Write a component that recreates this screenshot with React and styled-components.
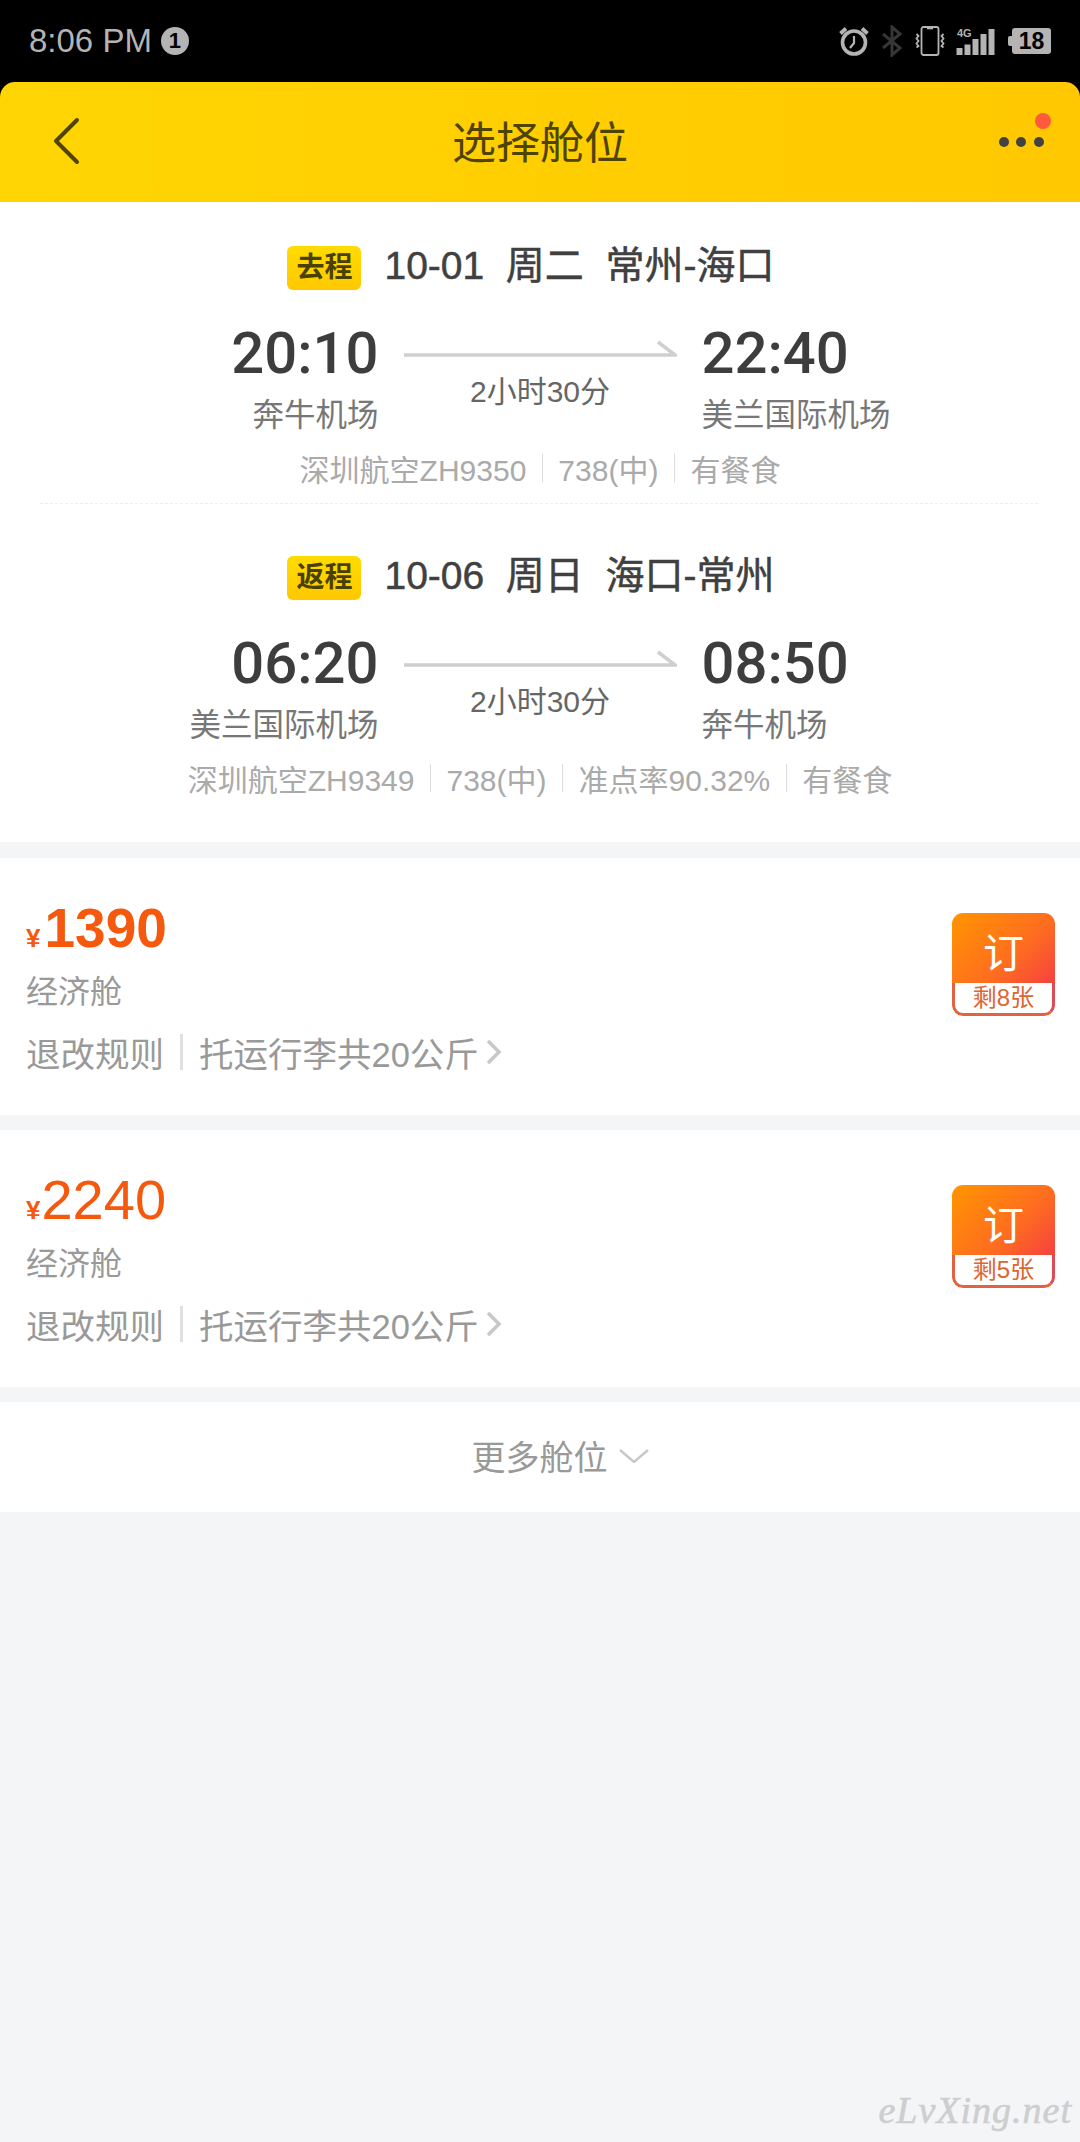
import React from "react";
import styled, { createGlobalStyle } from "styled-components";

const Global = createGlobalStyle`
  html, body { margin: 0; padding: 0; background: #f4f5f7; }
  body { font-family: "Liberation Sans", "Noto Sans CJK SC", sans-serif; }
  * { box-sizing: border-box; }
`;

const Page = styled.div`
  position: relative;
  width: 1080px;
  height: 2142px;
  overflow: hidden;
  background: #f4f5f7;
`;

const StatusBar = styled.div`
  height: 82px;
  background: #000;
  display: flex;
  align-items: center;
  padding: 0 29px 0 29px;
  color: #b4b4b4;
`;
const Clock = styled.span`
  font-size: 33px;
  line-height: 82px;
`;
const NoticeBadge = styled.span`
  width: 28px;
  height: 28px;
  margin-left: 9px;
  border-radius: 50%;
  background: #b4b4b4;
  color: #000;
  font-size: 22px;
  font-weight: 700;
  display: flex;
  align-items: center;
  justify-content: center;
`;
const StatusIcons = styled.div`
  margin-left: auto;
  display: flex;
  align-items: center;
`;
const Battery = styled.div`
  position: relative;
  margin-left: 17px;
  width: 39px;
  height: 26px;
  background: #b4b4b4;
  border-radius: 3px;
  color: #000;
  font-size: 23px;
  font-weight: 700;
  line-height: 26px;
  text-align: center;
  &::before {
    content: "";
    position: absolute;
    left: -4px;
    top: 8px;
    width: 4px;
    height: 10px;
    border-radius: 2px 0 0 2px;
    background: #b4b4b4;
  }
`;

const Header = styled.header`
  position: relative;
  height: 120px;
  background: #000;
`;
const HeaderFill = styled.div`
  height: 100%;
  border-radius: 15px 15px 0 0;
  padding-bottom: 5px;
  background: linear-gradient(90deg, #ffd503, #ffc800);
  display: flex;
  align-items: center;
  justify-content: center;
`;
const Title = styled.h1`
  margin: 0;
  font-size: 44px;
  font-weight: 400;
  color: #4f4300;
`;
const BackIcon = styled.svg`
  position: absolute;
  left: 50px;
  top: 33px;
`;
const MoreDots = styled.svg`
  position: absolute;
  right: 29px;
  top: 27px;
`;

const FlightPanel = styled.section`
  height: 640px;
  background: #fff;
  padding-top: 44px;
`;
const Flight = styled.div`
  display: flex;
  flex-direction: column;
  align-items: center;
`;
const DateRow = styled.div`
  height: 44px;
  margin-right: 18px;
  display: flex;
  align-items: center;
  gap: 23px;
`;
const TripTag = styled.span`
  width: 74px;
  height: 44px;
  border-radius: 6px;
  background: linear-gradient(180deg, #ffdc00, #ffc800);
  color: #4a4000;
  font-size: 28px;
  font-weight: 700;
  line-height: 44px;
  text-align: center;
`;
const DateText = styled.span`
  padding-bottom: 12px;
  font-size: 39px;
  color: #404040;
  white-space: pre;
  -webkit-text-stroke: 0.5px #404040;
`;
const TimeGrid = styled.div`
  width: 100%;
  margin-top: 28px;
  display: grid;
  grid-template-columns: 1fr 273px 1fr;
  column-gap: 25px;
`;
const Endpoint = styled.div`
  text-align: ${(p) => (p.$end ? "right" : "left")};
`;
const Time = styled.div`
  font-family: Roboto, "Liberation Sans", sans-serif;
  font-size: 58px;
  font-weight: 500;
  line-height: 70px;
  color: #3d3d3d;
`;
const Airport = styled.div`
  margin-top: 7px;
  font-size: 31.5px;
  line-height: 40px;
  color: #777;
`;
const Middle = styled.div`
  display: flex;
  flex-direction: column;
  align-items: center;
  padding-top: 21px;
`;
const Duration = styled.div`
  margin-top: 13px;
  font-size: 30px;
  line-height: 40px;
  color: #666;
`;
const InfoRow = styled.div`
  margin-top: 13px;
  height: 40px;
  display: flex;
  align-items: center;
  font-size: 30px;
  color: #aaa;
`;
const InfoSep = styled.i`
  width: 1px;
  height: 28px;
  margin: 0 15.5px;
  background: #ddd;
`;
const Dashed = styled.div`
  margin: 15px 42px 52px 40px;
  border-top: 1px dashed #eee;
`;

const Fare = styled.section`
  height: 257px;
  margin-top: ${(p) => p.$gap}px;
  background: #fff;
  padding: 40px 25px 0 26px;
  display: flex;
  justify-content: space-between;
`;
const Price = styled.div`
  height: 60px;
  display: flex;
  align-items: baseline;
  color: #f4590d;
  font-weight: ${(p) => (p.$bold ? 700 : 400)};
`;
const Yen = styled.span`
  font-size: 26px;
  font-weight: 700;
  margin-right: ${(p) => (p.$bold ? 4 : 1)}px;
`;
const Amount = styled.span`
  font-size: ${(p) => (p.$bold ? 55 : 56)}px;
  line-height: 60px;
`;
const Cabin = styled.div`
  margin-top: 14px;
  font-size: 32px;
  line-height: 40px;
  color: #999;
`;
const Rules = styled.div`
  margin-top: 20px;
  height: 40px;
  display: flex;
  align-items: center;
  font-size: 34.5px;
  color: #999;
`;
const RuleSep = styled.i`
  width: 3px;
  height: 36px;
  margin: 0 16px;
  background: #e0e0e0;
`;
const RuleChevron = styled.svg`
  margin-left: 7px;
`;
const Book = styled.div`
  margin-top: 15px;
  width: 103px;
  height: 103px;
  border-radius: 11px;
  overflow: hidden;
  display: flex;
  flex-direction: column;
`;
const BookLabel = styled.div`
  height: 70px;
  padding-top: 13px;
  background: linear-gradient(135deg, #ff9500 0%, #ff6d20 60%, #f5413f 100%);
  color: #fff;
  font-size: 41px;
  line-height: 57px;
  text-align: center;
`;
const BookStock = styled.div`
  height: 33px;
  border: 3px solid #e2633f;
  border-top: 0;
  border-right-color: #e04a55;
  border-radius: 0 0 11px 11px;
  background: #fff;
  color: #dd6530;
  font-size: 24px;
  line-height: 29px;
  text-align: center;
`;
const MoreRow = styled.div`
  margin-top: 15px;
  height: 110px;
  padding: 0 0 3px 40px;
  background: #fff;
  display: flex;
  align-items: center;
  justify-content: center;
  gap: 11px;
  font-size: 34px;
  color: #999;
`;
const Watermark = styled.div`
  position: absolute;
  right: 8px;
  bottom: 10px;
  font-family: "Liberation Serif", serif;
  font-style: italic;
  font-size: 38px;
  letter-spacing: 1px;
  color: #cdced0;
  -webkit-text-stroke: 0.6px #cdced0;
`;

const flights = [
  {
    tag: "去程",
    date: "10-01  周二  常州-海口",
    dep: "20:10",
    from: "奔牛机场",
    arr: "22:40",
    to: "美兰国际机场",
    info: ["深圳航空ZH9350", "738(中)", "有餐食"],
  },
  {
    tag: "返程",
    date: "10-06  周日  海口-常州",
    dep: "06:20",
    from: "美兰国际机场",
    arr: "08:50",
    to: "奔牛机场",
    info: ["深圳航空ZH9349", "738(中)", "准点率90.32%", "有餐食"],
  },
];

const fares = [
  { price: "1390", bold: true, left: 8, gap: 16 },
  { price: "2240", bold: false, left: 5, gap: 15 },
];

const AlarmIcon = () => (
  <svg width="32" height="32" viewBox="0 0 32 32" fill="none" stroke="#b4b4b4">
    <circle cx="16" cy="17.5" r="11.5" strokeWidth="3.6" />
    <path d="M16 11v7l-4 5" strokeWidth="2.2" />
    <path d="M2.5 8.5 8 3.5M29.5 8.5 24 3.5" strokeWidth="3.8" />
  </svg>
);
const BluetoothIcon = () => (
  <svg width="22" height="32" viewBox="0 0 22 32" fill="none" stroke="#363636" strokeWidth="3" style={{ marginLeft: 11 }}>
    <path d="M2 9l17 14-8 7V2l8 7L2 23" />
  </svg>
);
const VibrateIcon = () => (
  <svg width="32" height="32" viewBox="0 0 32 32" fill="none" stroke="#b4b4b4" style={{ marginLeft: 11 }}>
    <rect x="7.5" y="2" width="17" height="28" rx="2" strokeWidth="1.8" />
    <path d="M13 3.5h6" strokeWidth="1.6" />
    <path d="M2.5 9l2 2-2 2.5 2 2.5-2 2.5 2 2.5-2 1.5M29.5 9l-2 2 2 2.5-2 2.5 2 2.5-2 2.5 2 1.5" strokeWidth="1.8" />
  </svg>
);
const SignalIcon = () => (
  <svg width="39" height="27" viewBox="0 0 39 27" style={{ marginLeft: 10 }}>
    <text x="1" y="9" fontSize="11" fontWeight="700" fontFamily="Liberation Sans" fill="#b4b4b4">4G</text>
    <g fill="#b4b4b4">
      <rect x="0.5" y="20" width="6" height="7" />
      <rect x="8.5" y="16.5" width="6" height="10.5" />
      <rect x="16.5" y="11" width="6" height="16" />
      <rect x="24.5" y="6" width="6" height="21" />
      <rect x="32.5" y="1" width="6" height="26" />
    </g>
  </svg>
);

const Half = () => (
  <svg width="273" height="20" viewBox="0 0 273 20" fill="none" stroke="#cfcfcf" strokeWidth="3.5">
    <path d="M0 16h271L254 3" />
  </svg>
);

export default function App() {
  return (
    <Page>
      <Global />
      <StatusBar>
        <Clock>8:06 PM</Clock>
        <NoticeBadge>1</NoticeBadge>
        <StatusIcons>
          <AlarmIcon />
          <BluetoothIcon />
          <VibrateIcon />
          <SignalIcon />
          <Battery>18</Battery>
        </StatusIcons>
      </StatusBar>
      <Header>
        <HeaderFill>
          <Title>选择舱位</Title>
        </HeaderFill>
        <BackIcon width="34" height="52" viewBox="0 0 34 52" fill="none" stroke="#4f4300" strokeWidth="4" strokeLinecap="round" strokeLinejoin="round">
          <path d="M27 5 6 26l21 21" />
        </BackIcon>
        <MoreDots width="60" height="40" viewBox="0 0 60 40">
          <g fill="#424242">
            <circle cx="13" cy="33" r="5" />
            <circle cx="30" cy="33" r="5" />
            <circle cx="48" cy="33" r="5" />
          </g>
          <circle cx="52" cy="12" r="8" fill="#ff5a3c" />
        </MoreDots>
      </Header>

      <FlightPanel>
        {flights.map((f, i) => (
          <React.Fragment key={f.tag}>
            <Flight>
              <DateRow>
                <TripTag>{f.tag}</TripTag>
                <DateText>{f.date}</DateText>
              </DateRow>
              <TimeGrid>
                <Endpoint $end>
                  <Time>{f.dep}</Time>
                  <Airport>{f.from}</Airport>
                </Endpoint>
                <Middle>
                  <Half />
                  <Duration>2小时30分</Duration>
                </Middle>
                <Endpoint>
                  <Time>{f.arr}</Time>
                  <Airport>{f.to}</Airport>
                </Endpoint>
              </TimeGrid>
              <InfoRow>
                {f.info.map((t, j) => (
                  <React.Fragment key={t}>
                    {j > 0 && <InfoSep />}
                    <span>{t}</span>
                  </React.Fragment>
                ))}
              </InfoRow>
            </Flight>
            {i === 0 && <Dashed />}
          </React.Fragment>
        ))}
      </FlightPanel>

      {fares.map((f) => (
        <Fare key={f.price} $gap={f.gap}>
          <div>
            <Price $bold={f.bold}>
              <Yen $bold={f.bold}>¥</Yen>
              <Amount $bold={f.bold}>{f.price}</Amount>
            </Price>
            <Cabin>经济舱</Cabin>
            <Rules>
              退改规则
              <RuleSep />
              托运行李共20公斤
              <RuleChevron width="16" height="26" viewBox="0 0 16 26" fill="none" stroke="#c8c8c8" strokeWidth="3.6">
                <path d="M2 2l11 11L2 24" />
              </RuleChevron>
            </Rules>
          </div>
          <Book>
            <BookLabel>订</BookLabel>
            <BookStock>剩{f.left}张</BookStock>
          </Book>
        </Fare>
      ))}

      <MoreRow>
        更多舱位
        <svg width="30" height="14" viewBox="0 0 30 14" fill="none" stroke="#c8c8c8" strokeWidth="2.4">
          <path d="M1 1l14 12L29 1" />
        </svg>
      </MoreRow>
      <Watermark>eLvXing.net</Watermark>
    </Page>
  );
}
